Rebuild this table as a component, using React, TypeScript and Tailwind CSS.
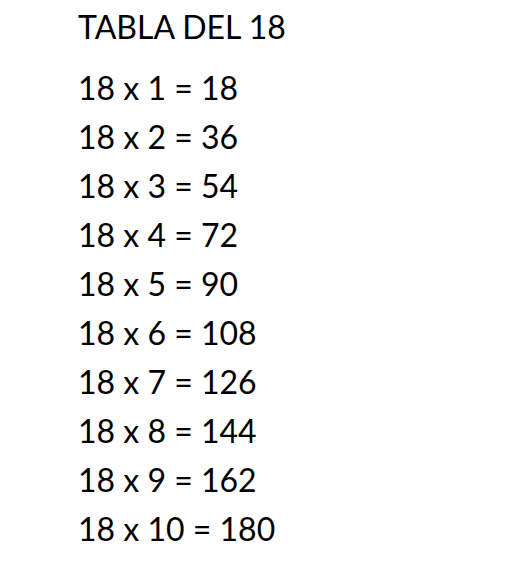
const rows = Array.from({ length: 10 }, (_, i) => i + 1);

export default function App() {
  return (
    <div className="w-[505px] h-[577px] bg-white text-black font-['Lato',sans-serif] pl-[78px]">
      <h1 className="pt-[7px] text-[32px] leading-[40px] font-normal">TABLA DEL 18</h1>
      <ul className="mt-[16px]">
        {rows.map((n) => (
          <li key={n} className="text-[32px] leading-[49px]">
            18 x {n} = {18 * n}
          </li>
        ))}
      </ul>
    </div>
  );
}
